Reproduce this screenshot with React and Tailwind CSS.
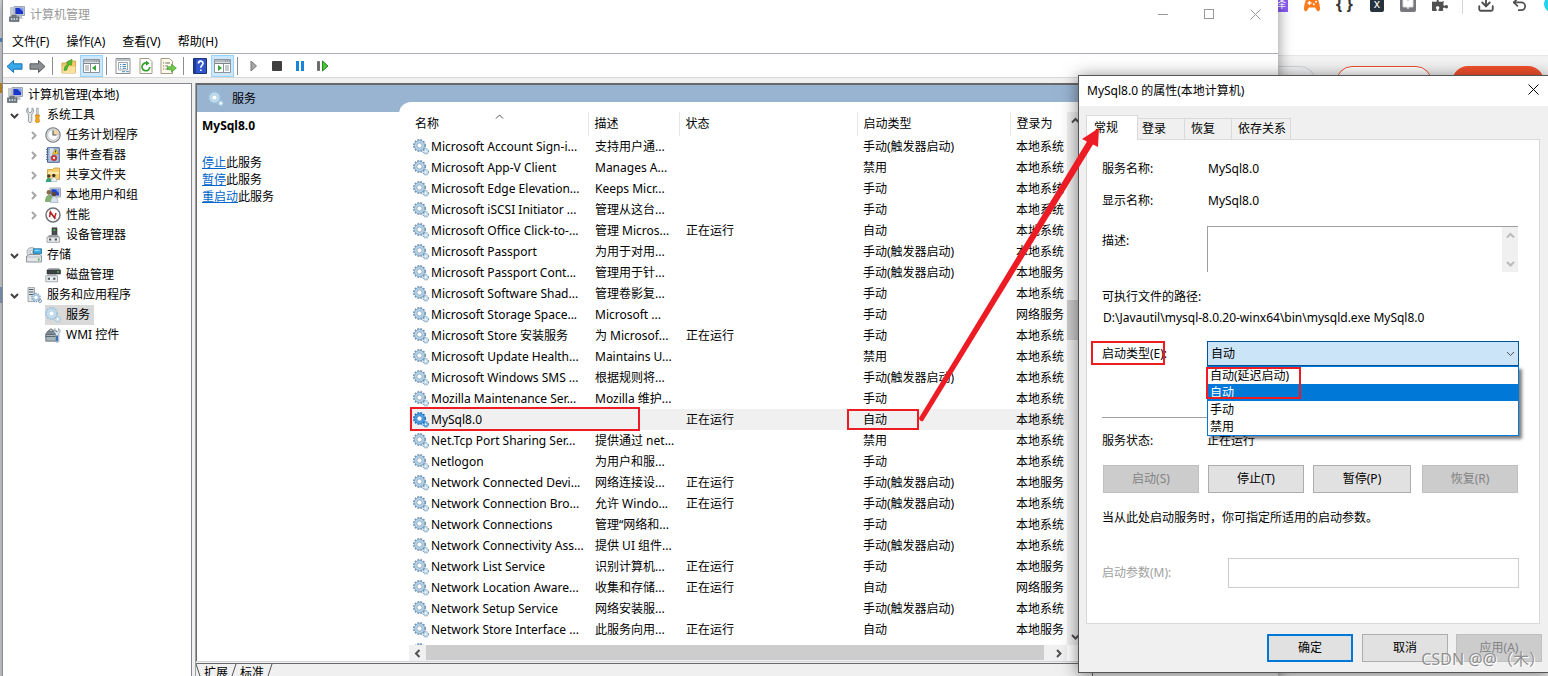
import { BookOpen, Download, Undo2 } from 'lucide-react'
import { FaPuzzlePiece } from 'react-icons/fa'
import clsx from 'clsx'

const services = [
  ['Microsoft Account Sign-i...', '支持用户通...', '', '手动(触发器启动)', '本地系统'],
  ['Microsoft App-V Client', 'Manages A...', '', '禁用', '本地系统'],
  ['Microsoft Edge Elevation...', 'Keeps Micr...', '', '手动', '本地系统'],
  ['Microsoft iSCSI Initiator ...', '管理从这台...', '', '手动', '本地系统'],
  ['Microsoft Office Click-to-...', '管理 Micros...', '正在运行', '自动', '本地系统'],
  ['Microsoft Passport', '为用于对用...', '', '手动(触发器启动)', '本地系统'],
  ['Microsoft Passport Cont...', '管理用于针...', '', '手动(触发器启动)', '本地服务'],
  ['Microsoft Software Shad...', '管理卷影复...', '', '手动', '本地系统'],
  ['Microsoft Storage Space...', 'Microsoft ...', '', '手动', '网络服务'],
  ['Microsoft Store 安装服务', '为 Microsof...', '正在运行', '手动', '本地系统'],
  ['Microsoft Update Health...', 'Maintains U...', '', '禁用', '本地系统'],
  ['Microsoft Windows SMS ...', '根据规则将...', '', '手动(触发器启动)', '本地系统'],
  ['Mozilla Maintenance Ser...', 'Mozilla 维护...', '', '手动', '本地系统'],
  ['MySql8.0', '', '正在运行', '自动', '本地系统'],
  ['Net.Tcp Port Sharing Ser...', '提供通过 net...', '', '禁用', '本地系统'],
  ['Netlogon', '为用户和服...', '', '手动', '本地系统'],
  ['Network Connected Devi...', '网络连接设...', '正在运行', '手动(触发器启动)', '本地服务'],
  ['Network Connection Bro...', '允许 Windo...', '正在运行', '手动(触发器启动)', '本地系统'],
  ['Network Connections', '管理“网络和...', '', '手动', '本地系统'],
  ['Network Connectivity Ass...', '提供 UI 组件...', '', '手动(触发器启动)', '本地系统'],
  ['Network List Service', '识别计算机...', '正在运行', '手动', '本地服务'],
  ['Network Location Aware...', '收集和存储...', '正在运行', '自动', '网络服务'],
  ['Network Setup Service', '网络安装服...', '', '手动(触发器启动)', '本地系统'],
  ['Network Store Interface ...', '此服务向用...', '正在运行', '自动', '本地服务'],
  ['', '', '', '', ''],
]

function Chevron({ dir, size = 9, color = '#505050', width = 2 }) {
  const paths = {
    up: 'M1 6.5 4.5 3 8 6.5',
    down: 'M1 3 4.5 6.5 8 3',
    left: 'M6.5 1 3 4.5 6.5 8',
    right: 'M3 1 6.5 4.5 3 8',
  }
  return (
    <svg width={size} height={size} viewBox="0 0 9 9" fill="none" stroke={color} strokeWidth={width}>
      <path d={paths[dir]} />
    </svg>
  )
}

function GearIcon({ selected, light }) {
  const rim = selected ? '#1a6fc0' : light ? '#9cc0d8' : '#6d8fae'
  const fill = selected ? '#4d9ee0' : light ? '#c4e0f0' : '#b4d4ea'
  return (
    <svg width="16" height="16" viewBox="0 0 16 16" fill="none" className="shrink-0">
      <circle cx="6.5" cy="6.5" r="5.7" stroke={rim} strokeWidth="1.6" strokeDasharray="1.8 1.2" />
      <circle cx="6.5" cy="6.5" r="4" stroke={fill} strokeWidth="2.6" />
      <circle cx="6.5" cy="6.5" r="5.1" stroke={rim} strokeWidth=".6" />
      <circle cx="6.5" cy="6.5" r="2.6" fill="#fff" stroke={rim} strokeWidth=".7" />
      <circle cx="12.7" cy="12.3" r="2.6" stroke={rim} strokeWidth="1.2" strokeDasharray="1.2 .9" />
      <circle cx="12.7" cy="12.3" r="1.6" fill="#fff" stroke={fill} strokeWidth="1.2" />
    </svg>
  )
}

function ComputerIcon() {
  return (
    <svg width="16" height="16" viewBox="0 0 16 16">
      <path d="M5 .5h10.5v9H5z" fill="#d8dde2" stroke="#8a949c" strokeWidth=".8" />
      <path d="M6.3 1.8h7.9v6.4H6.3z" fill="#1a35c8" />
      <path d="M10 1.8h4.2v4z" fill="#7fa2ef" />
      <path d="M8.5 9.5h4l1.5 3.2H9z" fill="#bcc3c9" />
      <path d="M1.5 1.5h3v8h-3z" fill="#c9ced3" stroke="#a0a7ad" strokeWidth=".5" />
      <path d="M3 9.3h4v1.6H3z" fill="none" stroke="#5f676e" />
      <path d="M.5 10.8h9.5v4.7H.5z" fill="#6f7a82" stroke="#505a61" strokeWidth=".6" />
      <path d="M2 12.3h1.4v1.4H2zM4.6 12.3H6v1.4H4.6zM7.2 12.3h1.4v1.4H7.2z" fill="#e8eef1" />
    </svg>
  )
}

function ToolsIcon() {
  return (
    <svg width="16" height="16" viewBox="0 0 16 16">
      <path d="M2 .8v3.6l2 1.4 2-1.4V.8c1.6 1 2.200 3.400 1 5L5.800 7v7.500c0 1.300-3.400 1.300-3.400 0V7L1.200 5.800C0 4.200.5 1.800 2 .8z" fill="#e4e7e9" stroke="#7f868b" strokeWidth=".8" />
      <path d="M10.500 1h1.800v7h-1.800z" fill="#cfd3d6" stroke="#868d92" strokeWidth=".5" />
      <path d="M9.300 8h4.200l-.6 3 .6 3.500c0 1.400-4.200 1.400-4.200 0l.6-3.500z" fill="#f3a81c" stroke="#b87608" strokeWidth=".6" />
    </svg>
  )
}

function ClockIcon() {
  return (
    <svg width="16" height="16" viewBox="0 0 16 16" fill="none">
      <circle cx="8" cy="8" r="7.2" fill="#dfe1e2" stroke="#777c80" strokeWidth="1.1" />
      <circle cx="8" cy="8" r="5.3" fill="#fbfcfd" stroke="#a8adb0" strokeWidth=".6" />
      <path d="M8 8V2.700A5.300 5.300 0 0 1 13.300 8z" fill="#f6d49a" />
      <path d="M8 3.500V8h3.500" stroke="#44586b" strokeWidth="1.1" />
    </svg>
  )
}

function EventIcon() {
  return (
    <svg width="16" height="16" viewBox="0 0 16 16">
      <path d="M2.500.7h11.800v14.600H2.500z" fill="#a9bfe0" stroke="#4b6496" />
      <path d="M5 2h3.500M5 4h3.500M5 6h3M5 8h2" stroke="#fff" />
      <path d="m10.500 2 3 5h-6z" fill="#ffd52e" stroke="#a88412" strokeWidth=".6" />
      <path d="M10.500 3.700v1.800" stroke="#443300" />
      <circle cx="9" cy="11" r="2.8" fill="#d83a3a" stroke="#9a2020" strokeWidth=".5" />
      <path d="m8 10 2 2m0-2-2 2" stroke="#fff" strokeWidth=".8" />
      <path d="M1 2.500h2.500M1 5h2.500M1 7.500h2.500M1 10h2.500M1 12.500h2.500" stroke="#5f6f8f" />
    </svg>
  )
}

function SharedFolderIcon() {
  return (
    <svg width="16" height="16" viewBox="0 0 16 16">
      <path d="M2.500 4V2.500h5L9 1h5.500v11.500h-12z" fill="#f5cf70" stroke="#c79a38" strokeWidth=".8" />
      <path d="M3 5h11v2H3z" fill="#fdeaae" />
      <circle cx="3.8" cy="9" r="1.7" fill="#4c3b2c" />
      <circle cx="8.8" cy="8.5" r="1.7" fill="#3a332b" />
      <path d="M.8 15c0-5.500 6-5.500 6 0z" fill="#36a37c" />
      <path d="M6 14.500c0-5.500 6-5.500 6 0z" fill="#e7eff5" stroke="#93a8b8" strokeWidth=".5" />
    </svg>
  )
}

function UsersIcon() {
  return (
    <svg width="16" height="16" viewBox="0 0 16 16">
      <path d="M5 1h10.500v9H5z" fill="#dce1e6" stroke="#8a949c" strokeWidth=".8" />
      <path d="M6.300 2.200h7.900v6.400H6.300z" fill="#2347cc" />
      <path d="M10 2.200h4.200v4z" fill="#7fa2ef" />
      <circle cx="4" cy="5.3" r="2.4" fill="#8d6b47" />
      <path d="M.5 14.500C.5 6 7.500 6 7.500 14.500z" fill="#82b46a" stroke="#517a3e" strokeWidth=".5" />
      <circle cx="9" cy="7" r="2.3" fill="#5a4634" />
      <path d="M5.500 15.500c0-8 7.500-8 7.500 0z" fill="#d7e2ec" stroke="#7e93a5" strokeWidth=".5" />
    </svg>
  )
}

function PerformanceIcon() {
  return (
    <svg width="16" height="16" viewBox="0 0 16 16" fill="none">
      <circle cx="8" cy="8" r="7" fill="#fff" stroke="#6f7478" strokeWidth="1.5" />
      <path d="m4.500 10 1-5 4 6 1.500-5" stroke="#d11f1f" strokeWidth="1.5" />
      <path d="M4 5.500 11.500 12" stroke="#333" strokeWidth=".7" />
    </svg>
  )
}

function DeviceIcon() {
  return (
    <svg width="16" height="16" viewBox="0 0 16 16">
      <path d="M7 .8h5v9H7z" fill="#474d51" stroke="#2c3033" strokeWidth=".6" />
      <path d="M8.500 2.200h1.700v1.700H8.500z" fill="#44d544" />
      <path d="M4 8h9l1.500 3H2z" fill="#9ba1a5" />
      <path d="M2 10h12.500v5.300H2z" fill="#e8eaeb" stroke="#868d91" strokeWidth=".7" />
      <path d="M4 11.500h2.200v2H4zM9.700 11.500H12v2H9.700z" fill="#4d565c" />
    </svg>
  )
}

function StorageIcon() {
  return (
    <svg width="16" height="16" viewBox="0 0 16 16">
      <circle cx="5.5" cy="5" r="4.5" fill="#d9dee1" stroke="#8a9196" strokeWidth=".7" />
      <circle cx="5.5" cy="5" r="1.4" fill="#fff" stroke="#8a9196" strokeWidth=".6" />
      <path d="M7.500 1.800h8v5h-8z" fill="#36a8dc" stroke="#1b6f9b" strokeWidth=".8" />
      <path d="M8.500 2.800h5v1.200h-5z" fill="#9bdcf6" />
      <path d="m2 8.500 1-1h11l1.500 1.500v6H.5V9z" fill="#e2e5e7" stroke="#777e83" strokeWidth=".8" />
      <path d="M1 10h14" stroke="#a8aeb2" strokeWidth=".7" />
      <path d="M12 11.500h1.500v2H12z" fill="#35b43a" />
    </svg>
  )
}

function DiskIcon() {
  return (
    <svg width="16" height="16" viewBox="0 0 16 16">
      <path d="m2 3 2-2h10l1.500 2z" fill="#aab0b4" />
      <path d="M2 3h13.500v4H2z" fill="#3b4145" stroke="#24282a" strokeWidth=".5" />
      <path d="M12 4.300h2v1.300h-2z" fill="#44d544" />
      <path d="m2 8.500 1-1.300h8l1 1.300z" fill="#9ba1a5" />
      <path d="M.8 8.800h11.700v6H.8z" fill="#eceeef" stroke="#868d91" strokeWidth=".7" />
      <path d="M2.800 10.700H5v2H2.800zM8.200 10.700h2.200v2H8.200z" fill="#4d565c" />
    </svg>
  )
}

function ServerIcon() {
  return (
    <svg width="16" height="16" viewBox="0 0 16 16" fill="none">
      <path d="M2 .6h6.500v14H2z" fill="#dfe4e7" stroke="#8b949a" strokeWidth=".8" />
      <path d="M3 2.500h4.500M3 5h4.500M3 7.500h4.500" stroke="#556069" />
      <circle cx="10" cy="10.5" r="4" stroke="#7795ad" strokeWidth="1.4" strokeDasharray="1.5 1" />
      <circle cx="10" cy="10.5" r="2.7" fill="#fff" stroke="#a9c9e2" strokeWidth="1.8" />
      <circle cx="14" cy="14" r="1.5" stroke="#7795ad" />
    </svg>
  )
}

function WmiIcon() {
  return (
    <svg width="16" height="16" viewBox="0 0 16 16">
      <path d="M1 6.500 3 4h9v7H1z" fill="#7e8a92" stroke="#4c565d" strokeWidth=".7" />
      <path d="M4 4c0-2.500 4-2.500 4 0" fill="none" stroke="#4c565d" />
      <path d="M.8 7.500h11v6.700H.8z" fill="#a8b4bc" stroke="#4c565d" strokeWidth=".7" />
      <path d="M.8 9.500h11" stroke="#5c676e" />
      <path d="M10 1.500v2.300l1.800 1 1.700-1V1.500c2.500 1.500 2 4 .3 5v8c0 1-3.300 1-3.300 0v-8c-2-1-2.200-3.500-.5-5z" fill="#d9e7f1" stroke="#6d808e" strokeWidth=".6" />
      <path d="M11 8.500h2v5.800h-2z" fill="#3b74b8" />
    </svg>
  )
}

function ArrowIcon({ forward }) {
  return (
    <svg width="17" height="15" viewBox="0 0 17 15">
      {forward ? (
        <path d="M16 7.500 9.500 1.500v3.300H1v5.400h8.500v3.300z" fill="#8d9093" stroke="#56595c" />
      ) : (
        <path d="M1 7.500 7.500 1.500v3.300H16v5.400H7.500v3.300z" fill="#38a9ea" stroke="#1b71ad" />
      )}
    </svg>
  )
}

function FolderUpIcon() {
  return (
    <svg width="16" height="16" viewBox="0 0 16 16">
      <path d="M1 15V5h5l1-2h7.500v12z" fill="#f2c966" stroke="#c39a45" strokeWidth=".8" />
      <path d="M1.500 8.500h13V15h-13z" fill="#fae09a" />
      <path d="M3 12.500C3 8 5.500 7 7 6L5.300 4.400 11 1.200l-.5 6L8.700 6.500C7 8 6 9.500 6 12z" fill="#4fbb32" stroke="#2c8419" strokeWidth=".5" />
    </svg>
  )
}

function PaneIcon({ right }) {
  return (
    <svg width="17" height="14" viewBox="0 0 17 14">
      <path d="M.5.5h16v13H.5z" fill="#fff" stroke="#8d959b" />
      <path d="M1 1h15v2.500H1z" fill="#b5bcc2" />
      <path d="M11 2h1m1 0h1m1 0h1M1 4.500h15" stroke="#7d868d" />
      {right ? (
        <>
          <path d="M9.500 4.500v9M11 7h4M11 9h4M11 11h4" stroke="#8d959b" />
          <path d="M4 6v6l4-3z" fill="#3aa335" />
        </>
      ) : (
        <>
          <path d="M7.500 4.500v9M2 7h4M2 9h4M2 11h4" stroke="#8d959b" />
          <path d="M13 6v6L9 9z" fill="#3aa335" />
        </>
      )}
    </svg>
  )
}

function PropertiesIcon() {
  return (
    <svg width="16" height="16" viewBox="0 0 16 16" fill="none">
      <path d="M1 .5h14v15H1z" fill="#fff" stroke="#8a8f93" />
      <path d="M1.500 1h13v2h-13z" fill="#bcc2c7" />
      <path d="M3.500 4.500h9V12h-9z" stroke="#a0a8ae" />
      <path d="M5 6.500h1.200M7.500 6.500H11M5 8.500h1.200M7.500 8.500H11M5 10.300h1.200M7.500 10.300H11" stroke="#4d8cc0" />
      <path d="M7 13.700h3M11 13.700h3" stroke="#4d8cc0" />
    </svg>
  )
}

function RefreshIcon() {
  return (
    <svg width="16" height="16" viewBox="0 0 16 16" fill="none">
      <path d="M2 .5h9L14 3.500v12H2z" fill="#fff" stroke="#a39a87" />
      <path d="M11.800 9A3.900 3.900 0 1 1 8.500 5" stroke="#35a22e" strokeWidth="1.7" />
      <path d="m8 2.500 3.500 2.700L8 7.800z" fill="#35a22e" />
    </svg>
  )
}

function ExportIcon() {
  return (
    <svg width="17" height="16" viewBox="0 0 17 16" fill="none">
      <path d="M1 .5h8.500L12.500 3.500v12H1z" fill="#fffbea" stroke="#a39a87" />
      <path d="M3 5h1.200M5.500 5H10M3 8h1.200M5.500 8H8M3 11h1.200M5.500 11H8" stroke="#6a6a6a" />
      <path d="M7.500 8.700h4V6.200l4.800 4-4.800 4v-2.500h-4z" fill="#6fca48" stroke="#36922a" strokeWidth=".6" />
    </svg>
  )
}

function HelpIcon() {
  return (
    <svg width="14" height="16" viewBox="0 0 14 16" fill="none">
      <path d="M.5.5h13v15H.5z" fill="#2f55c9" stroke="#1d3277" />
      <path d="M1 1h2v14H1z" fill="#1d3a9c" />
      <path d="M5.500 5.500c0-3 4.500-3 4.500-.3C10 7.200 7.800 7.300 7.800 9.800" stroke="#fff" strokeWidth="1.7" />
      <path d="M7 11.500h1.700V13H7z" fill="#fff" />
    </svg>
  )
}

function GamepadIcon() {
  return (
    <svg width="16" height="16" viewBox="0 0 16 16">
      <path d="M4.500 1h7c2.500 0 4.500 8 4.500 11.500 0 3.500-2.500 3.800-4 .5l-.8-1.500H4.800L4 13c-1.500 3.300-4 3-4-.5C0 9 2 1 4.500 1z" fill="#ff7a1a" />
      <path d="M3.500 7h4M5.500 5v4" stroke="#fff" strokeWidth="1.4" />
      <circle cx="9.8" cy="8.2" r="1" fill="#fff" />
      <circle cx="12" cy="5.8" r="1" fill="#fff" />
    </svg>
  )
}

const toolbar = [
  { label: '后退', icon: <ArrowIcon /> },
  { label: '前进', icon: <ArrowIcon forward /> },
  null,
  { label: '上移一级', icon: <FolderUpIcon /> },
  { label: '显示控制台树', icon: <PaneIcon />, active: true },
  null,
  { label: '属性', icon: <PropertiesIcon /> },
  { label: '刷新', icon: <RefreshIcon /> },
  { label: '导出列表', icon: <ExportIcon /> },
  null,
  { label: '帮助', icon: <HelpIcon /> },
  { label: '显示操作窗格', icon: <PaneIcon right />, active: true },
  null,
  {
    label: '启动服务',
    icon: (
      <svg width="8" height="12" viewBox="0 0 8 12"><path d="M1 1v10l5.500-5z" fill="#a6a6a6" stroke="#777" /></svg>
    ),
  },
  {
    label: '停止服务',
    icon: (
      <svg width="10" height="10" viewBox="0 0 10 10"><rect width="10" height="10" rx="1" fill="#3f3f3f" /></svg>
    ),
  },
  {
    label: '暂停服务',
    icon: (
      <svg width="8" height="10" viewBox="0 0 8 10"><path d="M0 0h3v10H0zM5 0h3v10H5z" fill="#1d83d4" /></svg>
    ),
  },
  {
    label: '重新启动服务',
    icon: (
      <svg width="12" height="12" viewBox="0 0 12 12">
        <path d="M.5 1.500h2v9h-2z" fill="#666" stroke="#444" strokeWidth=".6" />
        <path d="M5.500 1v10l5.500-5z" fill="#4cc43c" stroke="#238a1b" />
      </svg>
    ),
  },
]

const tree = [
  { level: 1, label: '系统工具', icon: <ToolsIcon />, arrow: 'down' },
  { level: 2, label: '任务计划程序', icon: <ClockIcon />, arrow: 'right' },
  { level: 2, label: '事件查看器', icon: <EventIcon />, arrow: 'right' },
  { level: 2, label: '共享文件夹', icon: <SharedFolderIcon />, arrow: 'right' },
  { level: 2, label: '本地用户和组', icon: <UsersIcon />, arrow: 'right' },
  { level: 2, label: '性能', icon: <PerformanceIcon />, arrow: 'right' },
  { level: 2, label: '设备管理器', icon: <DeviceIcon /> },
  { level: 1, label: '存储', icon: <StorageIcon />, arrow: 'down' },
  { level: 2, label: '磁盘管理', icon: <DiskIcon /> },
  { level: 1, label: '服务和应用程序', icon: <ServerIcon />, arrow: 'down' },
  { level: 2, label: '服务', icon: <GearIcon light />, selected: true },
  { level: 2, label: 'WMI 控件', icon: <WmiIcon /> },
]

function Browser() {
  return (
    <div className="absolute inset-0 bg-[#f3f3f3]">
      <div className="flex h-14 justify-end border-b border-gray-200 bg-white">
        {/* Extension icons, cut by the top of the screen */}
        <div className="-mt-1 flex h-4 items-center">
          <span className="mr-4 flex h-4 w-4 items-center justify-center bg-[#8b5cf6] text-xs text-white">译</span>
          <span className="mr-4"><GamepadIcon /></span>
          <span className="mr-4 w-4 text-center text-base leading-4 font-bold whitespace-nowrap text-[#333]">{'{ }'}</span>
          <span className="mx-0.5 mr-4 flex h-4 w-3.5 items-center justify-center rounded-xs bg-[#26323c] text-xs text-white">x</span>
          <span className="mr-4 flex h-4 w-4 items-center justify-center rounded-xs bg-[#77777c]">
            <BookOpen size={12} fill="#fff" stroke="#ddd" />
          </span>
          <FaPuzzlePiece className="h-4 w-4 text-[#505050]" />
          <span className="mx-3.5 h-5 w-px bg-gray-300" />
          <Download size={18} strokeWidth={2.5} color="#505050" />
          <Undo2 className="ml-4" size={17} strokeWidth={2.5} color="#505050" />
          <span className="ml-4 -mr-3 h-4 w-4 rounded-full bg-[#22d3ee]" />
        </div>
      </div>
      <div className="mt-2.5 flex justify-end gap-5 pr-1">
        <span className="h-8 w-28 rounded-full border border-gray-300 bg-gray-100" />
        <span className="h-8 w-24 rounded-full border border-[#f4512c] bg-white" />
        <span className="h-8 w-[92px] rounded-full bg-[#f4512c]" />
      </div>
    </div>
  )
}

function TreePane() {
  return (
    <nav className="w-[189px] shrink-0 border-t border-r border-[#828790] bg-white">
      <div className="flex h-[21px] items-center gap-[5px] pl-1">
        <ComputerIcon />
        <span>计算机管理(本地)</span>
      </div>
      <ul>
        {tree.map((item) => (
          <li
            key={item.label}
            className={clsx('flex h-5 items-center', item.level === 1 ? 'pl-[7px]' : 'pl-[26px]')}
          >
            <button aria-label={item.label} className="w-4 shrink-0">
              {item.arrow && (
                <Chevron dir={item.arrow} color={item.arrow === 'down' ? '#404040' : '#a6a6a6'} />
              )}
            </button>
            <a
              href="#"
              className={clsx('flex h-5 items-center gap-[5px] pr-1', item.selected && 'bg-[#d9d9d9]')}
            >
              {item.icon}
              {item.label}
            </a>
          </li>
        ))}
      </ul>
    </nav>
  )
}

function ServiceTable() {
  return (
    <table className="w-full table-fixed border-collapse text-left whitespace-nowrap">
      <colgroup>
        <col className="w-[179px]" />
        <col className="w-[91px]" />
        <col />
        <col className="w-[153px]" />
        <col className="w-[57px]" />
      </colgroup>
      <thead>
        <tr className="h-6">
          <th className="relative border-r border-gray-200 p-0 pl-1.5 font-normal">
            名称
            <span className="absolute top-0 left-[86px]">
              <Chevron dir="up" width={1} />
            </span>
          </th>
          <th className="border-r border-gray-200 p-0 pl-1.5 font-normal">描述</th>
          <th className="border-r border-gray-200 p-0 pl-1.5 font-normal">状态</th>
          <th className="border-r border-gray-200 p-0 pl-1.5 font-normal">启动类型</th>
          <th className="p-0 pl-1.5 font-normal">登录为</th>
        </tr>
      </thead>
      <tbody>
        {services.map(([name, desc, status, startup, logon], i) => {
          const selected = name === 'MySql8.0'
          return (
            <tr key={i} className={clsx('h-[21px]', selected && 'bg-[#f0f0f0]')}>
              <td className="relative p-0 pl-1">
                <span className="flex items-center gap-0.5">
                  <GearIcon selected={selected} />
                  {name}
                </span>
                {selected && (
                  <span className="absolute -top-0.5 left-px h-6 w-[230px] border-2 border-[#ed1c24]" />
                )}
              </td>
              <td className="p-0 pl-[7px]">{desc}</td>
              <td className="p-0 pl-[7px]">{status}</td>
              <td className="relative p-0 pl-1.5">
                {startup}
                {selected && (
                  <span className="absolute top-0 -left-2.5 h-[21px] w-[72px] border-2 border-[#ed1c24]" />
                )}
              </td>
              <td className="p-0 pl-1.5">{logon}</td>
            </tr>
          )
        })}
      </tbody>
    </table>
  )
}

function ServicesPane() {
  return (
    <section className="flex min-w-0 flex-1 flex-col border-l border-[#a0a0a0]">
      <div className="flex min-h-0 flex-1 border-t-2 border-l border-[#696969] bg-white">
        <div className="w-[202px] shrink-0">
          <h2 className="flex h-[27px] items-center gap-2 bg-[#99b4d1] pl-[11px]">
            <GearIcon light />
            服务
          </h2>
          <div className="pt-1 pl-[5px]">
            <h3 className="mb-[18px] leading-5 font-bold">MySql8.0</h3>
            <p className="leading-[17px]"><a href="#" className="text-[#0066cc] underline">停止</a>此服务</p>
            <p className="leading-[17px]"><a href="#" className="text-[#0066cc] underline">暂停</a>此服务</p>
            <p className="leading-[17px]"><a href="#" className="text-[#0066cc] underline">重启动</a>此服务</p>
          </div>
        </div>
        <div className="flex min-w-0 flex-1 bg-[#99b4d1] pt-[17px]">
          <div className="flex min-w-0 flex-1 flex-col rounded-tl-xl bg-white pt-2.5 pr-[5px] pl-2.5">
            <div className="flex min-h-0 flex-1">
              <div className="min-w-0 flex-1 overflow-hidden">
                <ServiceTable />
              </div>
              <div className="flex w-[17px] shrink-0 flex-col items-center bg-[#f0f0f0]">
                <button aria-label="向上滚动" className="flex h-[17px] w-full items-center pl-1"><Chevron dir="up" /></button>
                <div className="mt-[171px] h-10 w-full bg-[#cdcdcd]" />
                <button aria-label="向下滚动" className="mt-auto flex h-[17px] w-full items-center pl-1"><Chevron dir="down" /></button>
              </div>
            </div>
            <div className="mr-[17px] flex h-4 shrink-0 bg-[#f0f0f0]">
              <button aria-label="向左滚动" className="flex w-[17px] items-center justify-center"><Chevron dir="left" /></button>
              <div className="mr-1.5 h-[15px] flex-1 bg-[#cdcdcd]" />
              <button aria-label="向右滚动" className="flex w-[17px] items-center justify-center"><Chevron dir="right" /></button>
            </div>
          </div>
        </div>
      </div>
      <div className="h-0.5 border-t border-gray-300" />
      <div role="tablist" className="flex h-[25px] border-t border-[#696969]">
        <svg width="8" height="24" viewBox="0 0 8 24" stroke="#555"><path d="m0 0 8 24" /></svg>
        <button role="tab" aria-selected="true" className="h-[18px]">扩展</button>
        <svg width="12" height="24" viewBox="0 0 12 24" fill="none" stroke="#555"><path d="M8 0 0 24" /></svg>
        <button role="tab" aria-selected="false" className="h-[18px]">标准</button>
        <svg width="12" height="24" viewBox="0 0 12 24" fill="none" stroke="#555"><path d="M8 0 0 24" /></svg>
      </div>
    </section>
  )
}

function ManagementWindow() {
  return (
    <main className="absolute top-0 right-[270px] -bottom-3 left-0.5 flex flex-col border-l border-[#8c8c8c] bg-white shadow-[0_0_14px_rgba(0,0,0,0.45)]">
      <header className="flex h-7 shrink-0 items-center text-[#999]">
        <span className="mr-[5px] ml-1.5"><ComputerIcon /></span>
        <h1 className="flex-1 pt-0.5">计算机管理</h1>
        <button aria-label="最小化" className="flex h-7 w-[46px] items-center justify-center">
          <span className="h-px w-2.5 bg-[#999]" />
        </button>
        <button aria-label="最大化" className="flex h-7 w-[46px] items-center justify-center">
          <span className="h-2.5 w-2.5 border border-[#999]" />
        </button>
        <button aria-label="关闭" className="flex h-7 w-[46px] items-center justify-center">
          <svg width="11" height="11" viewBox="0 0 11 11" stroke="#999"><path d="m.5.5 10 10m0-10-10 10" /></svg>
        </button>
      </header>
      <div className="flex h-[26px] shrink-0 items-center gap-px border-b border-[#a9adb8] pt-0.5 pl-px">
        <button className="px-2">文件(F)</button>
        <button className="px-2">操作(A)</button>
        <button className="px-2">查看(V)</button>
        <button className="px-2">帮助(H)</button>
      </div>
      <div className="flex h-6 shrink-0 items-center border-b border-[#d8d8d8] pt-px">
        {toolbar.map((item, i) =>
          item ? (
            <button
              key={item.label}
              aria-label={item.label}
              className={clsx(
                'flex h-[22px] w-[23px] items-center justify-center',
                item.active && 'border border-[#99d1ff] bg-[#cce8ff]',
              )}
            >
              {item.icon}
            </button>
          ) : (
            <span key={i} className="mr-1 ml-[3px] h-[18px] w-px bg-[#8c8c8c]" />
          ),
        )}
      </div>
      <div className="flex min-h-0 flex-1 gap-[3px] bg-[#f0f0f0] pt-[5px]">
        <TreePane />
        <ServicesPane />
        <aside className="w-[186px] shrink-0 border-l border-[#696969]" />
      </div>
    </main>
  )
}

const dialogButton = 'h-7 border border-[#adadad] bg-[#e1e1e1]'
const disabledButton = 'h-7 border border-[#bfbfbf] bg-[#cccccc] text-[#838383]'

function PropertiesDialog() {
  return (
    <div
      role="dialog"
      aria-label="MySql8.0 的属性"
      className="absolute top-[75px] -right-0.5 w-[472px] border border-[#555] bg-[#f0f0f0] shadow-[0_2px_16px_rgba(0,0,0,0.5)]"
    >
      <header className="flex h-[30px] items-center justify-between bg-white pr-2 pl-2">
        <h2>MySql8.0 的属性(本地计算机)</h2>
        <button aria-label="关闭" className="px-0.5 pb-1">
          <svg width="11" height="11" viewBox="0 0 11 11" stroke="#000"><path d="m.5.5 10 10m0-10-10 10" /></svg>
        </button>
      </header>

      <div className="pt-[9px] pr-[9px] pb-2.5 pl-[7px]">
        <div role="tablist" className="flex h-6 items-end text-left">
          <button role="tab" aria-selected="true" className="relative -mb-px h-[25px] w-[52px] border border-b-0 border-[#d9d9d9] bg-white pr-2 pl-[7px] text-left">常规</button>
          <button role="tab" aria-selected="false" className="h-[21px] w-[46px] border-t border-[#d9d9d9] pl-1 text-left">登录</button>
          <button role="tab" aria-selected="false" className="h-[21px] w-[47px] border-t border-l border-[#d9d9d9] pl-1.5 text-left">恢复</button>
          <button role="tab" aria-selected="false" className="h-[21px] border border-b-0 border-[#d9d9d9] pr-1 pl-1.5">依存关系</button>
        </div>

        <form className="border border-[#d9d9d9] bg-white pt-[19px] pr-5 pb-[35px] pl-[15px]">
          <dl className="space-y-3 leading-5">
            <div className="flex">
              <dt className="w-[106px]">服务名称:</dt>
              <dd>MySql8.0</dd>
            </div>
            <div className="flex">
              <dt className="w-[106px]">显示名称:</dt>
              <dd>MySql8.0</dd>
            </div>
          </dl>
          <div className="mt-[15px] flex pr-px">
            <label htmlFor="desc" className="w-[105px] shrink-0 pt-[5px] leading-5">描述:</label>
            <div className="flex h-[46px] flex-1 border-t border-l border-[#a0a0a0]">
              <textarea id="desc" readOnly className="min-w-0 flex-1 resize-none" />
              <div className="flex w-4 flex-col items-center justify-between bg-[#f0f0f0] py-1">
                <Chevron dir="up" color="#bbb" />
                <Chevron dir="down" color="#bbb" />
              </div>
            </div>
          </div>
          <p className="mt-[15px] leading-5">可执行文件的路径:</p>
          <p className="mt-px pl-px leading-5">D:\Javautil\mysql-8.0.20-winx64\bin\mysqld.exe MySql8.0</p>

          <div className="relative mt-[13px] flex items-center">
            <label htmlFor="startup" className="w-[105px] shrink-0">启动类型(E):</label>
            <span className="absolute top-0 -left-[11px] h-6 w-[74px] border-2 border-[#ed1c24]" />
            <div className="relative flex-1">
              <select
                id="startup"
                defaultValue="自动"
                className="block h-[25px] w-full appearance-none border border-[#005499] bg-[#cce4f7] pl-[3px]"
              >
                <option>自动(延迟启动)</option>
                <option>自动</option>
                <option>手动</option>
                <option>禁用</option>
              </select>
              <span className="pointer-events-none absolute top-2 right-1">
                <Chevron dir="down" width={1} />
              </span>
              <ul className="absolute top-full right-0 left-0 z-10 border border-[#0078d7] bg-white leading-[17px] shadow-[3px_3px_3px_rgba(0,0,0,0.5)]">
                <li className="pl-0.5">自动(延迟启动)</li>
                <li className="bg-[#0078d7] pl-0.5 text-white">自动</li>
                <li className="pl-0.5">手动</li>
                <li className="pl-0.5">禁用</li>
              </ul>
              <span className="absolute top-[26px] -left-px z-20 h-8 w-[95px] border-2 border-[#ed1c24]" />
            </div>
          </div>

          <hr className="mt-[51px] border-[#a0a0a0]" />
          <div className="mt-[13px] flex leading-5">
            <span className="w-[105px]">服务状态:</span>
            <span>正在运行</span>
          </div>
          <div className="mt-3.5 flex gap-[9px] pr-px pl-px">
            <button type="button" disabled className={clsx(disabledButton, 'w-24')}>启动(S)</button>
            <button type="button" className={clsx(dialogButton, 'w-24')}>停止(T)</button>
            <button type="button" className={clsx(dialogButton, 'w-[98px]')}>暂停(P)</button>
            <button type="button" disabled className={clsx(disabledButton, 'ml-auto w-24')}>恢复(R)</button>
          </div>
          <p className="mt-[15px] leading-5">当从此处启动服务时，你可指定所适用的启动参数。</p>
          <div className="mt-[30px] flex items-center">
            <label htmlFor="params" className="w-[126px] shrink-0 text-[#a0a0a0]">启动参数(M):</label>
            <input id="params" disabled className="h-[30px] min-w-0 flex-1 border border-[#ccc] bg-white px-1" />
          </div>
        </form>

        <div className="-mr-0.5 mt-2.5 flex justify-end gap-2">
          <button className="mr-px h-7 w-[86px] border-2 border-[#0078d7] bg-[#e1e1e1]">确定</button>
          <button className={clsx(dialogButton, 'w-[86px]')}>取消</button>
          <button disabled className={clsx(disabledButton, 'w-[86px]')}>应用(A)</button>
        </div>
      </div>
    </div>
  )
}

export default function App() {
  return (
    <div className="relative h-screen overflow-hidden font-['Noto_Sans','Noto_Sans_CJK_SC',sans-serif] text-xs text-black">
      <Browser />
      {/* Sliver of the window behind, left of the console */}
      <div className="absolute inset-y-0 left-0 flex w-0.5 flex-col bg-[#dfe3e8]">
        <span className="mt-[38px] h-1 bg-[#5b9bd5]" />
        <span className="mt-[41px] h-2.5 bg-[#d99a2b]" />
        <span className="mt-[194px] h-4 bg-[#8fa9cf]" />
      </div>
      <ManagementWindow />
      <PropertiesDialog />
      <svg
        className="pointer-events-none absolute top-[126px] right-[448px]"
        width="182"
        height="296"
        viewBox="0 0 182 296"
      >
        <path d="M181 2 180 21l-5-2.500L5 295q-3 1-4-3L169 15.500 164 13z" fill="#ed1c24" />
      </svg>
      <span className="absolute right-[3px] bottom-[7px] text-base leading-5 text-[#8f8f8f] [text-shadow:1px_1px_0_#fff]">
        CSDN @@（木）
      </span>
    </div>
  )
}
